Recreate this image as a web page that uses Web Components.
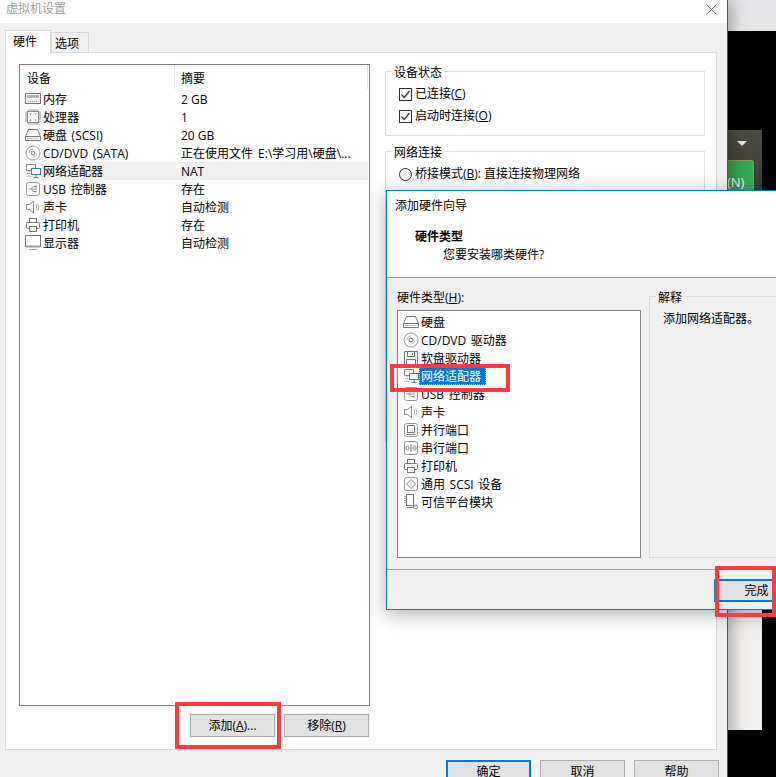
<!DOCTYPE html>
<html lang="zh-CN">
<head>
<meta charset="utf-8">
<title>虚拟机设置</title>
<style>
  html, body { margin: 0; padding: 0; background: #000; }
  body { font: 12px/18px "Open Sans", "Noto Sans CJK SC", sans-serif; color: #000; }
</style>
</head>
<body>
<app-desktop>
  <vm-window>
    <device-list slot="list">
      <hw-item icon="memory" summary="2 GB">内存</hw-item>
      <hw-item icon="cpu" summary="1">处理器</hw-item>
      <hw-item icon="disk" summary="20 GB">硬盘 (SCSI)</hw-item>
      <hw-item icon="cd" summary="正在使用文件 E:\学习用\硬盘\..." style="--summary-spacing:2px">CD/DVD (SATA)</hw-item>
      <hw-item icon="net" summary="NAT" selected>网络适配器</hw-item>
      <hw-item icon="usb" summary="存在">USB 控制器</hw-item>
      <hw-item icon="sound" summary="自动检测">声卡</hw-item>
      <hw-item icon="printer" summary="存在">打印机</hw-item>
      <hw-item icon="display" summary="自动检测">显示器</hw-item>
    </device-list>
    <push-button slot="actions">添加(<u>A</u>)...</push-button>
    <push-button slot="actions">移除(<u>R</u>)</push-button>
    <group-box slot="side" label="设备状态" style="height:74px">
      <check-row checked>已连接(<u>C</u>)</check-row>
      <check-row checked>启动时连接(<u>O</u>)</check-row>
    </group-box>
    <group-box slot="side" label="网络连接" style="height:300px">
      <check-row radio>桥接模式(<u>B</u>): 直接连接物理网络</check-row>
    </group-box>
    <push-button slot="footer" primary>确定</push-button>
    <push-button slot="footer">取消</push-button>
    <push-button slot="footer">帮助</push-button>
  </vm-window>
  <wizard-window>
    <hw-item wizard icon="disk">硬盘</hw-item>
    <hw-item wizard icon="cd">CD/DVD 驱动器</hw-item>
    <hw-item wizard icon="floppy">软盘驱动器</hw-item>
    <hw-item wizard icon="net" selected>网络适配器</hw-item>
    <hw-item wizard icon="usb">USB 控制器</hw-item>
    <hw-item wizard icon="sound">声卡</hw-item>
    <hw-item wizard icon="parallel">并行端口</hw-item>
    <hw-item wizard icon="serial">串行端口</hw-item>
    <hw-item wizard icon="printer">打印机</hw-item>
    <hw-item wizard icon="scsi">通用 SCSI 设备</hw-item>
    <hw-item wizard icon="tpm">可信平台模块</hw-item>
  </wizard-window>
  <red-mark style="left:175px;top:702px;width:106px;height:47px"></red-mark>
  <red-mark style="left:390px;top:364px;width:120px;height:28px"></red-mark>
  <red-mark style="left:715px;top:566px;width:61px;height:51px"></red-mark>
</app-desktop>

<script>
// icon strokes, all on a 16x16 box
const ICONS = {
  memory: '<rect x="0.5" y="2.5" width="15" height="10" fill="#f4f4f4" stroke="#7a7a7a"/><rect x="2" y="4" width="12" height="3" fill="#b4b4b4"/><path d="M3 10.5h10" stroke="#999" stroke-dasharray="1 1"/>',
  cpu: '<rect x="2.5" y="2.5" width="11" height="11" fill="#fff" stroke="#888"/><path d="M4 0v2M6 0v2M8 0v2M10 0v2M12 0v2M4 14v2M6 14v2M8 14v2M10 14v2M12 14v2M0 4h2M0 6h2M0 8h2M0 10h2M0 12h2M14 4h2M14 6h2M14 8h2M14 10h2M14 12h2" stroke="#999"/><path d="M5 5h1M10 5h1M5 11h1M10 11h1" stroke="#555"/>',
  disk: '<path d="M0.5 9.5L3.5 2.5H12.5L15.5 9.5V13.5H0.5Z" fill="#fff" stroke="#777"/><path d="M0.5 9.5H15.5" stroke="#777"/><path d="M2 11.5h12" stroke="#ccc"/>',
  cd: '<circle cx="8" cy="8" r="7" fill="#fff" stroke="#999"/><circle cx="8" cy="8" r="2" fill="#fff" stroke="#777"/><path d="M4 8a4 4 0 0 1 4-4M12 8a4 4 0 0 1-4 4" fill="none" stroke="#bbb"/>',
  floppy: '<path d="M1.5 1.5H14.5V14.5H1.5Z" fill="#fff" stroke="#777"/><path d="M4.5 1.5V6.5H11.5V1.5M9.5 3V5" fill="none" stroke="#777"/><path d="M3.5 14.5V9.5H12.5V14.5" fill="none" stroke="#777"/>',
  net: '<rect x="1.5" y="1.5" width="9" height="6" fill="#fff" stroke="#888"/><path d="M2 10.5h4M4 8v5M1.5 13.5h5" stroke="#8aa" stroke-dasharray="1 1"/><rect x="6.5" y="5.5" width="9" height="6" fill="#fff" stroke="#3b7fb0"/><path d="M11 12v2M8.5 14.5h5" stroke="#3b7fb0"/>',
  usb: '<rect x="1.5" y="1.5" width="13" height="13" rx="2" fill="#fff" stroke="#999"/><path d="M3.5 8H12M6 8L8 5.5H10M6.5 8L8 10.5H10" fill="none" stroke="#999"/><rect x="10" y="4.5" width="2" height="2" fill="#999"/><circle cx="10.5" cy="10.5" r="1" fill="#999"/>',
  sound: '<path d="M1.5 5.5H4.5L8.5 2V14L4.5 10.5H1.5Z" fill="#fff" stroke="#888"/><path d="M11 5.5Q12.5 8 11 10.5M13 4.5Q14.5 8 13 11.5" fill="none" stroke="#aaa"/>',
  printer: '<rect x="4.5" y="1.5" width="7" height="4" fill="#fff" stroke="#777"/><rect x="1.5" y="5.5" width="13" height="6" rx="1" fill="#fff" stroke="#777"/><rect x="4.5" y="9.5" width="7" height="5" fill="#fff" stroke="#777"/>',
  display: '<rect x="0.5" y="0.5" width="15" height="11" fill="#fff" stroke="#777"/><path d="M1 11.5H15" stroke="#999" stroke-width="2"/><path d="M4 14.5H12" stroke="#aaa"/>',
  parallel: '<rect x="1.5" y="1.5" width="13" height="13" rx="2" fill="#fff" stroke="#999"/><path d="M4.5 3.5H11.5V10.5H4.5Z" fill="none" stroke="#777"/><path d="M3.5 12.5H12.5" stroke="#777"/>',
  serial: '<rect x="1.5" y="1.5" width="13" height="13" rx="2" fill="#fff" stroke="#999"/><circle cx="4.5" cy="8" r="1.6" fill="none" stroke="#777"/><circle cx="11.5" cy="8" r="1.6" fill="none" stroke="#777"/><path d="M8 4.5V11.5" stroke="#777"/>',
  scsi: '<rect x="1.5" y="1.5" width="13" height="13" rx="2" fill="#fff" stroke="#999"/><path d="M8 3.5L12.5 8L8 12.5L3.5 8Z" fill="none" stroke="#888"/><circle cx="8" cy="8" r="1.5" fill="#ddd"/>',
  tpm: '<rect x="3.5" y="0.5" width="7" height="11" fill="#fff" stroke="#777"/><path d="M2 2v8" stroke="#666" stroke-dasharray="1 1"/><circle cx="12.5" cy="13" r="2" fill="#fff" stroke="#777"/><path d="M4 13.5H10.5" stroke="#777"/>'
}

class HwIcon extends HTMLElement {
  constructor () {
    super()
    this.shadow = this.attachShadow({ mode: 'open' })
  }

  connectedCallback () {
    this.shadow.innerHTML = `
      <style>
        :host { display: block; width: 16px; height: 16px; }
        svg { display: block; }
      </style>
      <svg width="16" height="16" viewBox="0 0 16 16">${ICONS[this.getAttribute('name')] || ''}</svg>`
  }
}

// one row, used by the device table and by the wizard list
class HwItem extends HTMLElement {
  constructor () {
    super()
    this.shadow = this.attachShadow({ mode: 'open' })
  }

  connectedCallback () {
    const summary = this.getAttribute('summary')
    this.shadow.innerHTML = `
      <style>
        :host { display: flex; align-items: center; height: 18px; padding-left: 5px; white-space: nowrap; }
        hw-icon { flex: none; }
        .cells { flex: 1; display: flex; height: 18px; line-height: 20px; }
        .name { width: 138px; padding-left: 2px; word-spacing: 1.5px; }
        .summary { word-spacing: var(--summary-spacing, 0); }
        :host([selected]:not([wizard])) .cells { background: #f0f0f0; margin-right: 1px; }
        :host([wizard]) .cells { flex: none; }
        :host([wizard]) .name { width: auto; padding: 0 2px; }
        :host([wizard][selected]) .name { background: #0078d7; color: #fff; padding-right: 5px; outline: 1px dotted #9cc8ee; outline-offset: -1px; }
      </style>
      <hw-icon name="${this.getAttribute('icon')}"></hw-icon>
      <div class="cells">
        <div class="name"><slot></slot></div>
        ${summary ? `<div class="summary">${summary}</div>` : ''}
      </div>`
  }
}

class DeviceList extends HTMLElement {
  constructor () {
    super()
    this.shadow = this.attachShadow({ mode: 'open' })
    this.shadow.innerHTML = `
      <style>
        :host { display: block; flex: 1; background: #fff; border: 1px solid #82828c; }
        .head { display: flex; height: 25px; line-height: 27px; }
        .head div { box-sizing: border-box; border-right: 1px solid #e5e5e5; margin-bottom: 1px; }
        .device { width: 155px; padding-left: 7px; }
        .sum { width: 193px; padding-left: 6px; }
      </style>
      <div class="head"><div class="device">设备</div><div class="sum">摘要</div></div>
      <slot></slot>`
  }
}

class PushButton extends HTMLElement {
  constructor () {
    super()
    this.shadow = this.attachShadow({ mode: 'open' })
    this.shadow.innerHTML = `
      <style>
        :host {
          display: flex; align-items: center; justify-content: center; box-sizing: border-box;
          width: 85px; height: 23px; background: #e1e1e1; border: 1px solid #adadad; white-space: nowrap;
          box-shadow: 0 0 0 1px #f0f0f0;
        }
        :host([primary]) { border: 2px solid #0078d7; box-shadow: none; }
      </style>
      <slot></slot>`
  }
}

class GroupBox extends HTMLElement {
  constructor () {
    super()
    this.shadow = this.attachShadow({ mode: 'open' })
  }

  connectedCallback () {
    this.shadow.innerHTML = `
      <style>
        :host { display: block; }
        fieldset { box-sizing: border-box; height: 100%; margin: 0; padding: 3px 13px 0; border: 1px solid #dcdcdc; min-width: 0; }
        legend { padding: 0 2px; margin-left: -7px; height: 18px; line-height: 21px; }
      </style>
      <fieldset><legend>${this.getAttribute('label')}</legend><slot></slot></fieldset>`
  }
}

class CheckRow extends HTMLElement {
  constructor () {
    super()
    this.shadow = this.attachShadow({ mode: 'open' })
  }

  connectedCallback () {
    const mark = this.hasAttribute('radio')
      ? '<circle cx="6.5" cy="6.5" r="6" fill="#fff" stroke="#333"/>'
      : `<rect x="0.5" y="0.5" width="12" height="12" fill="#fff" stroke="#333"/>${this.hasAttribute('checked') ? '<path d="M2.5 6.5L5.2 9.5L10.5 3" fill="none" stroke="#333" stroke-width="1.2"/>' : ''}`
    this.shadow.innerHTML = `
      <style>
        :host { display: flex; align-items: center; gap: 3px; height: 22px; white-space: nowrap; }
        svg { flex: none; display: block; }
      </style>
      <svg width="13" height="13" viewBox="0 0 13 13">${mark}</svg>
      <div><slot></slot></div>`
  }
}

class VmWindow extends HTMLElement {
  constructor () {
    super()
    this.shadow = this.attachShadow({ mode: 'open' })
    this.shadow.innerHTML = `
      <style>
        :host {
          position: absolute; left: 0; top: 0; width: 727px; height: 777px;
          display: flex; flex-direction: column; overflow: visible;
          background: #f0f0f0; box-shadow: 1px 0 0 #555, 6px 0 14px rgba(0,0,0,.28);
        }
        .title { flex: none; box-sizing: border-box; display: flex; justify-content: space-between; align-items: center; height: 23px; padding: 0 10px 5px 6px; background: #fff; color: #9c9c9c; }
        .title svg { display: block; }
        .tabs { flex: none; display: flex; align-items: flex-end; height: 29px; padding-left: 5px; }
        .tab { box-sizing: border-box; height: 20px; width: 38px; padding-left: 3px; line-height: 21px; border: 1px solid #d9d9d9; border-bottom: none; }
        .tab.on { width: 46px; height: 23px; padding-left: 7px; background: #fff; position: relative; top: 1px; line-height: 21px; }
        .panel {
          flex: none; box-sizing: border-box; height: 698px; margin: 0 10px 0 5px; padding: 11px 11px 12px 13px;
          background: #fff; border: 1px solid #d9d9d9; display: flex; gap: 15px;
        }
        .left { flex: none; width: 351px; display: flex; flex-direction: column; }
        .actions { flex: none; display: flex; justify-content: flex-end; gap: 9px; margin: 8px 1px 0 0; }
        .side { flex: 1; display: flex; flex-direction: column; gap: 6px; margin-top: -2px; }
        .footer { flex: none; display: flex; justify-content: flex-end; gap: 9px; padding: 10px 8px 0 0; }
      </style>
      <div class="title">
        <span>虚拟机设置</span>
        <svg width="11" height="11" viewBox="0 0 11 11"><path d="M0.5 0.5L10.5 10.5M10.5 0.5L0.5 10.5" stroke="#777" fill="none"/></svg>
      </div>
      <div class="tabs"><div class="tab on">硬件</div><div class="tab">选项</div></div>
      <div class="panel">
        <div class="left">
          <slot name="list"></slot>
          <div class="actions"><slot name="actions"></slot></div>
        </div>
        <div class="side"><slot name="side"></slot></div>
      </div>
      <div class="footer"><slot name="footer"></slot></div>`
  }
}

class WizardWindow extends HTMLElement {
  constructor () {
    super()
    this.shadow = this.attachShadow({ mode: 'open' })
    this.shadow.innerHTML = `
      <style>
        :host {
          position: absolute; left: 386px; top: 190px; width: 422px; height: 420px; box-sizing: border-box;
          display: flex; flex-direction: column;
          background: #f0f0f0; border: 1px solid #0078d7; box-shadow: 0 4px 18px rgba(0,0,0,.32);
        }
        .head { flex: none; box-sizing: border-box; height: 87px; background: #fff; border-bottom: 1px solid #a0a0a0; padding: 6px 0 0 8px; }
        .sub { margin: 13px 0 0 20px; font-weight: bold; }
        .sub2 { margin: 0 0 0 48px; }
        .body { flex: 1; display: grid; grid-template-columns: 244px 1fr; gap: 8px; padding: 9px 8px 11px 10px; }
        .label { height: 18px; margin: 1px 0 4px; line-height: 19px; }
        .box { box-sizing: border-box; height: 248px; padding: 2px 0 0; background: #fff; border: 1px solid #82828c; }
        .footer { flex: none; height: 40px; box-sizing: border-box; border-top: 1px solid #a0a0a0; padding: 9px 8px 0 0; display: flex; justify-content: flex-end; }
        .info { padding: 1px 0; line-height: 20px; }
      </style>
      <div class="head">
        <div>添加硬件向导</div>
        <div class="sub">硬件类型</div>
        <div class="sub2">您要安装哪类硬件?</div>
      </div>
      <div class="body">
        <div>
          <div class="label">硬件类型(<u>H</u>):</div>
          <div class="box"><slot></slot></div>
        </div>
        <group-box label="解释"><div class="info">添加网络适配器。</div></group-box>
      </div>
      <div class="footer"><push-button primary>完成</push-button></div>`
  }
}

class RedMark extends HTMLElement {
  constructor () {
    super()
    this.shadow = this.attachShadow({ mode: 'open' })
    this.shadow.innerHTML = `
      <style>
        :host { position: absolute; box-sizing: border-box; border: 4px solid #ff3b3b; }
      </style>`
  }
}

// black desktop plus the bits of the window that shows behind the dialogs
class AppDesktop extends HTMLElement {
  constructor () {
    super()
    this.shadow = this.attachShadow({ mode: 'open' })
    this.shadow.innerHTML = `
      <style>
        :host { display: block; position: relative; width: 776px; height: 777px; overflow: hidden; background: #000; }
        .bar { position: absolute; left: 727px; top: 0; width: 49px; height: 31px; background: #e6e6e9; }
        .tool { position: absolute; left: 727px; top: 130px; width: 35px; height: 60px; background: linear-gradient(#4d4c42, #3e3d35); }
        .arrow { position: absolute; left: 10px; top: 11px; border: 5px solid transparent; border-top: 5px solid #e8e8e8; border-bottom: none; }
        .go { position: absolute; left: 0; top: 30px; width: 27px; height: 30px; overflow: hidden; background: #35a94e; border-radius: 0 3px 0 0; border: 1px solid #8a9a58; border-left: none; border-bottom: none; box-sizing: border-box; color: #fff; font-size: 13px; line-height: 42px; }
        .strip { position: absolute; left: 727px; top: 610px; width: 35px; height: 120px; background: #f0efee; }
      </style>
      <div class="bar"></div>
      <div class="tool"><div class="arrow"></div><div class="go">(N)</div></div>
      <div class="strip"></div>
      <slot></slot>`
  }
}

customElements.define('hw-icon', HwIcon)
customElements.define('hw-item', HwItem)
customElements.define('device-list', DeviceList)
customElements.define('push-button', PushButton)
customElements.define('group-box', GroupBox)
customElements.define('check-row', CheckRow)
customElements.define('vm-window', VmWindow)
customElements.define('wizard-window', WizardWindow)
customElements.define('red-mark', RedMark)
customElements.define('app-desktop', AppDesktop)
</script>
</body>
</html>
